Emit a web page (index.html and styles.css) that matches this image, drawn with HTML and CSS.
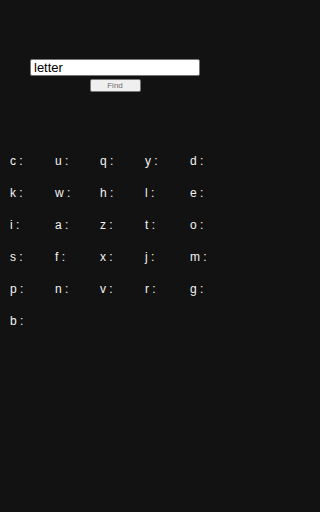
FILE: index.html
```html
<!DOCTYPE html>
<html>
<head>
<meta charset="utf-8">
<meta name="viewport" content="width=230">
<link rel="stylesheet" href="styles.css">
</head>
<body>
<div class="app">
  <div class="search">
    <input class="query" type="text" value="letter">
    <button class="find">Find</button>
  </div>
  <div class="letters">
    <div class="cell">c :</div><div class="cell">u :</div><div class="cell">q :</div><div class="cell">y :</div><div class="cell">d :</div>
    <div class="cell">k :</div><div class="cell">w :</div><div class="cell">h :</div><div class="cell">l :</div><div class="cell">e :</div>
    <div class="cell">i :</div><div class="cell">a :</div><div class="cell">z :</div><div class="cell">t :</div><div class="cell">o :</div>
    <div class="cell">s :</div><div class="cell">f :</div><div class="cell">x :</div><div class="cell">j :</div><div class="cell">m :</div>
    <div class="cell">p :</div><div class="cell">n :</div><div class="cell">v :</div><div class="cell">r :</div><div class="cell">g :</div>
    <div class="cell">b :</div>
  </div>
</div>
</body>
</html>
```
FILE: styles.css
```css
html, body {
  margin: 0;
  padding: 0;
  background: #121212;
  height: 100%;
}
.app {
  width: 230px;
  font-family: "Liberation Sans", Arial, sans-serif;
  padding-top: 59px;
}
.search {
  display: flex;
  flex-direction: column;
  align-items: center;
  gap: 3px;
}
.query {
  box-sizing: border-box;
  width: 170px;
  height: 17px;
  margin: 0;
  padding: 0 3px;
  border: 1px solid #767676;
  border-radius: 2px;
  background: #fff;
  color: #000;
  font-family: "Liberation Sans", Arial, sans-serif;
  font-size: 13px;
  outline: none;
}
.find {
  box-sizing: border-box;
  width: 51px;
  height: 13px;
  margin: 0;
  padding: 0;
  border: 1px solid #767676;
  border-radius: 2px;
  background: #efefef;
  color: #6e6e6e;
  font-family: "Liberation Sans", Arial, sans-serif;
  font-size: 8px;
  line-height: 11px;
}
.letters {
  display: grid;
  grid-template-columns: repeat(5, 45px);
  grid-auto-rows: 32px;
  padding-left: 10px;
  margin-top: 61px;
}
.cell {
  color: #f4f4f4;
  font-size: 12px;
  line-height: 16px;
}
```
